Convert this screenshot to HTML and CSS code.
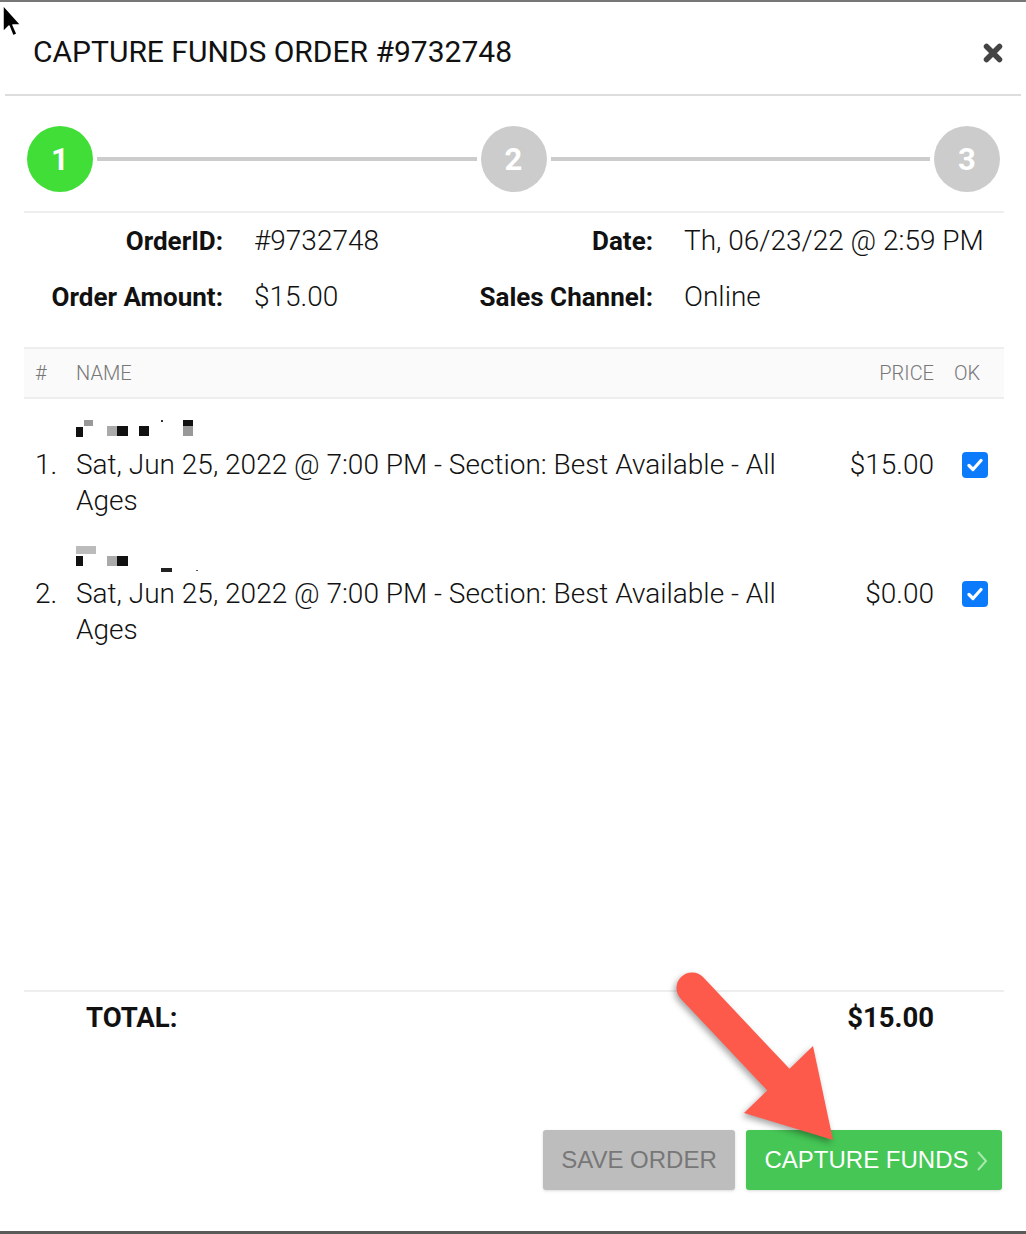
FILE: index.html
```html
<!DOCTYPE html>
<html lang="en">
<head>
    <meta charset="UTF-8">
    <meta name="viewport" content="width=device-width, initial-scale=1.0">
    <title>Capture Funds</title>
    <link rel="stylesheet" href="styles.css">
</head>
<body>

<div class="modal">
    <header class="modal-head">
        <h2 class="modal-title">CAPTURE FUNDS ORDER #9732748</h2>
        <span class="close">
            <svg width="20" height="20" viewBox="0 0 20 20"><path d="M3.5 3.5 L16.5 16.5 M16.5 3.5 L3.5 16.5" stroke="#444" stroke-width="5.5" stroke-linecap="round"/></svg>
        </span>
    </header>

    <div class="modal-body">
        <div class="stepper">
            <span class="step active">1</span>
            <span class="step-line"></span>
            <span class="step">2</span>
            <span class="step-line"></span>
            <span class="step">3</span>
        </div>

        <div class="order-info">
            <span class="label">OrderID:</span>
            <span class="value">#9732748</span>
            <span class="label">Date:</span>
            <span class="value">Th, 06/23/22 @ 2:59 PM</span>
            <span class="label">Order Amount:</span>
            <span class="value">$15.00</span>
            <span class="label">Sales Channel:</span>
            <span class="value">Online</span>
        </div>

        <div class="items">
            <div class="items-head">
                <span>#</span>
                <span>NAME</span>
                <span class="price">PRICE</span>
                <span class="ok-head">OK</span>
            </div>

            <div class="item">
                <svg class="redact" width="130" height="24" viewBox="0 0 130 24">
                    <rect x="0" y="7" width="7" height="10" fill="#111"/>
                    <rect x="8" y="0" width="9" height="6" fill="#999"/>
                    <rect x="31" y="6" width="10" height="10" fill="#aaa"/>
                    <rect x="41" y="6" width="11" height="10" fill="#111"/>
                    <rect x="63" y="6" width="10" height="10" fill="#111"/>
                    <rect x="85" y="0" width="2" height="2" fill="#333"/>
                    <rect x="107" y="0" width="10" height="6" fill="#111"/>
                    <rect x="107" y="6" width="10" height="10" fill="#999"/>
                </svg>
                <span class="num">1.</span>
                <span class="name">Sat, Jun 25, 2022 @ 7:00 PM - Section: Best Available - All Ages</span>
                <span class="price">$15.00</span>
                <span class="ok"><span class="check"><svg width="16" height="14" viewBox="0 0 16 14"><path d="M2 7.5 L6 11.5 L14 2.5" fill="none" stroke="#fff" stroke-width="3.2" stroke-linecap="round" stroke-linejoin="round"/></svg></span></span>
            </div>

            <div class="item">
                <svg class="redact" width="130" height="30" viewBox="0 0 130 30">
                    <rect x="0" y="0" width="20" height="8" fill="#bbb"/>
                    <rect x="0" y="10" width="7" height="10" fill="#111"/>
                    <rect x="31" y="10" width="10" height="10" fill="#aaa"/>
                    <rect x="41" y="10" width="11" height="10" fill="#111"/>
                    <rect x="85" y="22" width="11" height="4" fill="#222"/>
                    <rect x="120" y="24" width="2" height="1" fill="#555"/>
                </svg>
                <span class="num">2.</span>
                <span class="name">Sat, Jun 25, 2022 @ 7:00 PM - Section: Best Available - All Ages</span>
                <span class="price">$0.00</span>
                <span class="ok"><span class="check"><svg width="16" height="14" viewBox="0 0 16 14"><path d="M2 7.5 L6 11.5 L14 2.5" fill="none" stroke="#fff" stroke-width="3.2" stroke-linecap="round" stroke-linejoin="round"/></svg></span></span>
            </div>
        </div>

        <div class="total">
            <span>TOTAL:</span>
            <span>$15.00</span>
        </div>

        <div class="actions">
            <button class="btn btn-save">SAVE ORDER</button>
            <button class="btn btn-capture">CAPTURE FUNDS
                <svg class="chevron" width="12" height="22" viewBox="0 0 12 22"><path d="M2 2 L10 11 L2 20" fill="none" stroke="#a9e8b0" stroke-width="2"/></svg>
            </button>
        </div>
    </div>

    <!-- annotation arrow -->
    <svg class="callout" width="200" height="200" viewBox="660 955 200 200">
        <path d="M692 988 L792 1094" stroke="#fe5a4c" stroke-width="31" stroke-linecap="round"/>
        <polygon points="813,1046 833,1140 744,1113" fill="#fe5a4c"/>
    </svg>

    <svg class="cursor" width="22" height="36" viewBox="0 0 22 36">
        <path d="M2 1 L2 28 L8 22 L12 32 L16 30 L12 21 L20 21 Z" fill="#000" stroke="#fff" stroke-width="1.5" stroke-linejoin="round"/>
    </svg>
</div>

</body>
</html>
```

FILE: styles.css
```css
body {
    margin: 0;
    font-family: Roboto, "Liberation Sans", sans-serif;
    color: #111;
    background-color: #fff;
}

.modal {
    position: relative;
    width: 1026px;
    height: 1234px;
    box-sizing: border-box;
    border-top: 2px solid #777;
    border-bottom: 3px solid #5a5a5a;
    display: flex;
    flex-direction: column;
    overflow: hidden;
}

.modal-head {
    margin: 0 5px;
    height: 94px;
    border-bottom: 2px solid #ddd;
    display: flex;
    align-items: center;
    justify-content: space-between;
    padding: 6px 18px 0 28px;
    box-sizing: border-box;
}

.modal-title {
    margin: 0;
    font-size: 30px;
    font-weight: 400;
    color: #111;
}

.close {
    display: flex;
    margin-top: 4px;
}

.modal-body {
    flex: 1;
    display: flex;
    flex-direction: column;
    padding: 0 22px 0 24px;
}

.stepper {
    display: flex;
    align-items: center;
    padding: 30px 4px 19px 3px;
    border-bottom: 2px solid #eee;
}

.step {
    width: 66px;
    height: 66px;
    border-radius: 50%;
    background-color: #ccc;
    color: #fff;
    font-size: 31px;
    font-weight: 700;
    display: flex;
    align-items: center;
    justify-content: center;
    flex-shrink: 0;
}

.step.active {
    background-color: #40de36;
}

.step-line {
    flex: 1;
    height: 4px;
    margin: 0 4px;
    background-color: #ccc;
}

.order-info {
    display: grid;
    grid-template-columns: 199px 229px 201px 1fr;
    line-height: 56px;
    padding-bottom: 22px;
}

.order-info .label {
    font-size: 26px;
    font-weight: 700;
    text-align: right;
}

.order-info .value {
    font-size: 28px;
    font-weight: 300;
    padding-left: 31px;
}

.items {
    flex: 1;
}

.items-head,
.item {
    display: grid;
    grid-template-columns: 41px 1fr 134px 70px;
    padding-left: 11px;
}

.items-head {
    height: 48px;
    align-items: center;
    background-color: #fafafa;
    border-top: 2px solid #eee;
    border-bottom: 2px solid #eee;
    font-size: 20px;
    font-weight: 300;
    color: #777;
}

.items-head .price,
.item .price {
    text-align: right;
}

.ok-head {
    padding-left: 20px;
}

.item {
    padding: 14px 0 9px 11px;
    font-size: 28px;
    font-weight: 300;
    line-height: 36px;
    align-items: start;
}

.redact {
    grid-column: 2;
    height: 34px;
    padding-top: 4px;
    box-sizing: border-box;
}

.num {
    grid-column: 1;
}

.ok {
    padding-left: 28px;
}

.check {
    margin-top: 5px;
    width: 26px;
    height: 26px;
    border-radius: 4px;
    background-color: #0b7bfb;
    display: flex;
    align-items: center;
    justify-content: center;
}

.total {
    display: flex;
    justify-content: space-between;
    border-top: 2px solid #eee;
    line-height: 52px;
    font-size: 27.5px;
    font-weight: 700;
    padding: 0 70px 0 62px;
}

.actions {
    display: flex;
    justify-content: flex-end;
    gap: 11px;
    margin-top: 86px;
    padding: 0 2px 41px 0;
}

.btn {
    height: 60px;
    border: none;
    border-radius: 3px;
    font-family: "Liberation Sans", Arial, sans-serif;
    font-size: 24px;
    padding: 0;
    box-shadow: 0 1px 3px rgba(0, 0, 0, 0.15);
}

.btn-save {
    width: 192px;
    background-color: #bdbdbd;
    color: #777;
}

.btn-capture {
    width: 256px;
    background-color: #45c655;
    color: #fff;
    display: flex;
    align-items: center;
    justify-content: center;
    gap: 7px;
    padding-left: 4px;
}

.chevron {
    margin-top: 1px;
}

.callout {
    position: absolute;
    left: 660px;
    top: 953px;
    filter: drop-shadow(-2px 3px 3px rgba(0, 0, 0, 0.35));
}

.cursor {
    position: absolute;
    left: 1px;
    top: 2px;
}
```
